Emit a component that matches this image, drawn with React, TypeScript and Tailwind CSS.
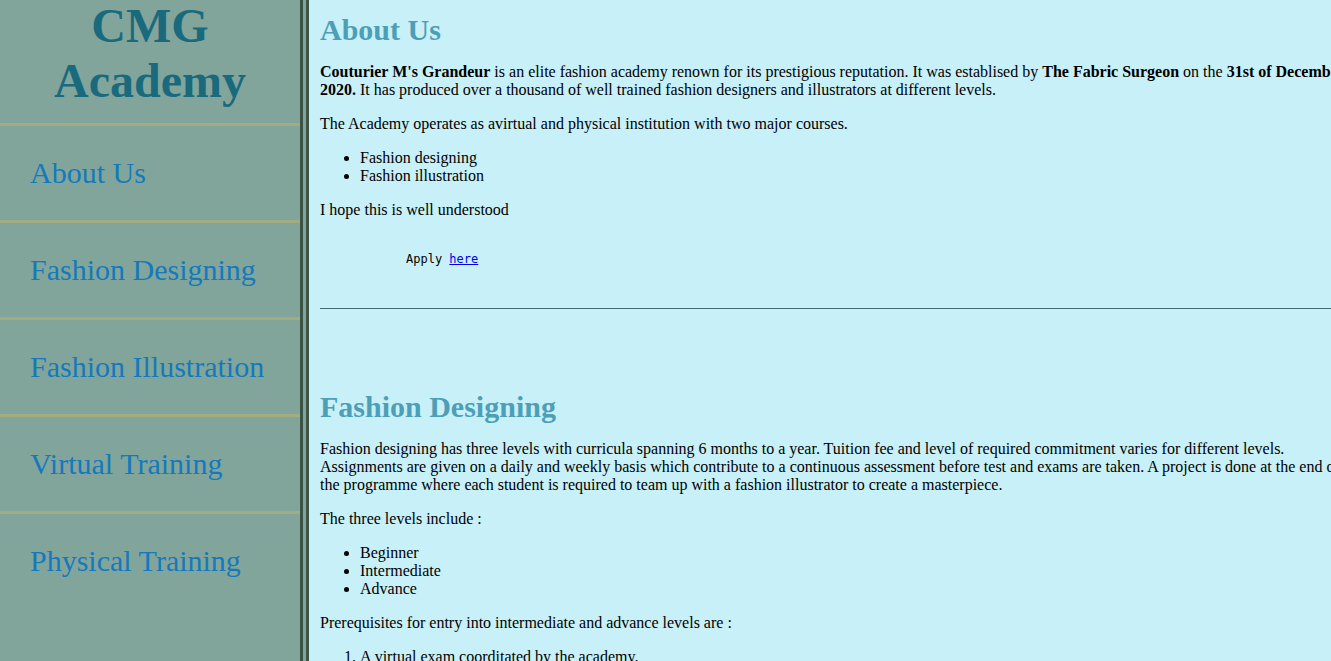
import React from "react";

const serif = { fontFamily: '"Liberation Serif", "Times New Roman", serif' };

const navItems = [
  "About Us",
  "Fashion Designing",
  "Fashion Illustration",
  "Virtual Training",
  "Physical Training",
];

export default function App() {
  return (
    <div
      className="flex h-[661px] w-full overflow-hidden bg-[#c8f0f8] leading-[normal] text-black"
      style={serif}
    >
      <aside className="flex h-full w-[309px] shrink-0 flex-col border-r-[9px] border-double border-[#3b5445] bg-[#82a59b]">
        <div className="h-[123px] shrink-0">
          <h1 className="-mt-[2px] text-center text-[48px] font-bold leading-[55px] text-[#1a6a7e]">
            CMG
            <br />
            Academy
          </h1>
        </div>
        <nav className="flex flex-col">
          {navItems.map((item) => (
            <a
              key={item}
              href="#"
              className="block h-[97px] border-t-[3px] border-[#a3ab82] pl-[30px] pt-[30px] text-[30px] leading-[normal] text-[#1479bd]"
            >
              {item}
            </a>
          ))}
        </nav>
      </aside>

      <main className="flex-1 overflow-hidden">
        <div className="w-[1046px] pl-[11px] text-[16px]">
          <h2 className="mt-[13px] text-[30px] font-bold leading-[34px] text-[#4c9fb7]">
            About Us
          </h2>
          <p className="mt-[16px]">
            <b>Couturier M's Grandeur</b> is an elite fashion academy renown for
            its prestigious reputation. It was establised by{" "}
            <b>The Fabric Surgeon</b> on the <b>31st of December 2020.</b> It
            has produced over a thousand of well trained fashion designers and
            illustrators at different levels.
          </p>
          <p className="mt-[16px]">
            The Academy operates as avirtual and physical institution with two
            major courses.
          </p>
          <ul className="mt-[16px] list-disc pl-[40px]">
            <li>Fashion designing</li>
            <li>Fashion illustration</li>
          </ul>
          <p className="mt-[16px]">I hope this is well understood</p>
          <div
            className="mt-[33px] pl-[86px] text-[12px] leading-[15px]"
            style={{ fontFamily: '"DejaVu Sans Mono", monospace' }}
          >
            Apply{" "}
            <a href="#" className="text-[#0000ee] underline">
              here
            </a>
          </div>
          <hr className="mt-[41px] border-0 border-t border-[#3d6b73]" />

          <h2 className="mt-[81px] text-[30px] font-bold leading-[34px] text-[#4c9fb7]">
            Fashion Designing
          </h2>
          <p className="mt-[16px]">
            Fashion designing has three levels with curricula spanning 6 months
            to a year. Tuition fee and level of required commitment varies for
            different levels. Assignments are given on a daily and weekly basis
            which contribute to a continuous assessment before test and exams
            are taken. A project is done at the end of the programme where each
            student is required to team up with a fashion illustrator to create
            a masterpiece.
          </p>
          <p className="mt-[16px]">The three levels include :</p>
          <ul className="mt-[16px] list-disc pl-[40px]">
            <li>Beginner</li>
            <li>Intermediate</li>
            <li>Advance</li>
          </ul>
          <p className="mt-[16px]">
            Prerequisites for entry into intermediate and advance levels are :
          </p>
          <ol className="mt-[16px] list-decimal pl-[40px]">
            <li>A virtual exam coorditated by the academy.</li>
            <li>A physical interview with the instructors.</li>
          </ol>
        </div>
      </main>
    </div>
  );
}
